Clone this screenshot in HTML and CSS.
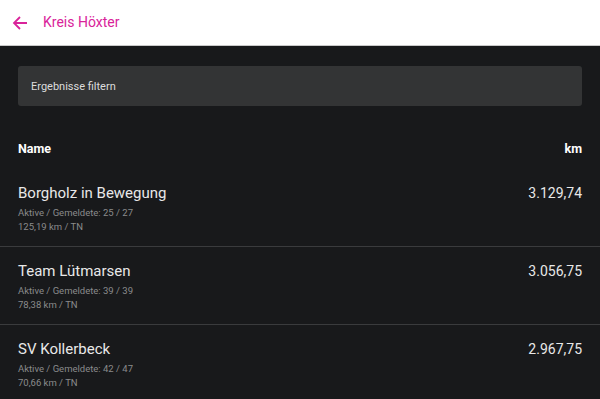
FILE: index.html
```html
<!DOCTYPE html>
<html lang="de">
<head>
  <meta charset="UTF-8">
  <meta name="viewport" content="width=device-width, initial-scale=1.0">
  <title>Kreis Höxter</title>
  <link rel="stylesheet" href="styles.css">
</head>
<body>
  <header class="topbar">
    <svg class="back" width="16" height="16" viewBox="0 0 16 16">
      <path d="M15 8H2M8 2L2 8l6 6" fill="none" stroke="currentColor" stroke-width="1.8"/>
    </svg>
    <span class="title">Kreis Höxter</span>
  </header>

  <main class="content">
    <div class="filter">Ergebnisse filtern</div>

    <div class="table-head">
      <span>Name</span>
      <span>km</span>
    </div>

    <div class="row">
      <div class="info">
        <div class="team">Borgholz in Bewegung</div>
        <div class="meta">Aktive / Gemeldete: 25 / 27</div>
        <div class="meta">125,19 km / TN</div>
      </div>
      <div class="km">3.129,74</div>
    </div>
    <div class="row">
      <div class="info">
        <div class="team">Team Lütmarsen</div>
        <div class="meta">Aktive / Gemeldete: 39 / 39</div>
        <div class="meta">78,38 km / TN</div>
      </div>
      <div class="km">3.056,75</div>
    </div>
    <div class="row">
      <div class="info">
        <div class="team">SV Kollerbeck</div>
        <div class="meta">Aktive / Gemeldete: 42 / 47</div>
        <div class="meta">70,66 km / TN</div>
      </div>
      <div class="km">2.967,75</div>
    </div>
  </main>
</body>
</html>
```

FILE: styles.css
```css
body {
  margin: 0;
  font-family: 'Roboto', 'Lato', sans-serif;
  background-color: #18191b;
  color: #e8e8e8;
  overflow: hidden;
}
.topbar {
  height: 45px;
  background-color: #fff;
  border-bottom: 1px solid #c9c9c9;
  display: flex;
  align-items: center;
  padding-left: 12px;
  color: #d9239a;
}
.back {
  margin-right: 15px;
}
.title {
  font-size: 14px;
  margin-top: -1px;
}
.content {
  padding: 20px 18px 0;
}
.filter {
  height: 40px;
  background-color: #333435;
  border-radius: 3px;
  display: flex;
  align-items: center;
  padding-left: 13px;
  font-size: 11px;
  color: #dcdcdc;
}
.table-head {
  display: flex;
  justify-content: space-between;
  font-size: 12.5px;
  font-weight: bold;
  color: #fff;
  padding: 35px 0 13px;
}
.row {
  display: flex;
  justify-content: space-between;
  padding: 14px 18px 12px;
  border-bottom: 1px solid #3a3b3d;
  margin: 0 -18px;
}
.team {
  font-size: 15px;
  line-height: 20px;
  margin-bottom: 3px;
}
.meta {
  font-size: 9.5px;
  color: #8a8b8c;
  line-height: 14px;
}
.km {
  font-size: 14px;
  padding-top: 2px;
}
```
